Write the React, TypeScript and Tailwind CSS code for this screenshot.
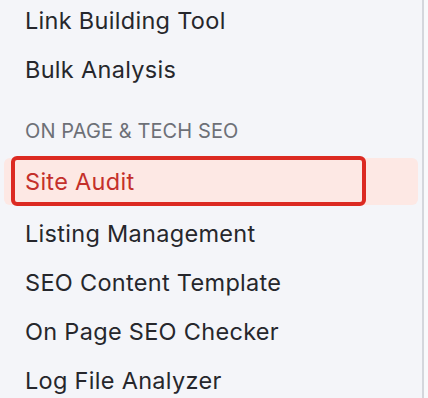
export default function App() {
  const tools = ["Listing Management", "SEO Content Template", "On Page SEO Checker", "Log File Analyzer"];

  return (
    <div className="flex h-[398px] w-[428px] overflow-hidden bg-[#f4f5f9] font-['Inter',sans-serif]">
      <div className="flex-1 pt-[1px]">
        <div className="flex h-[40px] items-center pl-[25px] text-[23.5px] tracking-[0.3px] text-[#26272c]">Link Building Tool</div>
        <div className="mt-[9px] flex h-[40px] items-center pl-[25px] text-[23.5px] tracking-[0.3px] text-[#26272c]">Bulk Analysis</div>

        <div className="mt-[26px] pl-[25px] text-[20px] tracking-[0.1px] text-[#6d7077]">ON PAGE &amp; TECH SEO</div>

        <div className="relative mt-[12px] ml-[4px] mr-[4px] flex h-[47px] items-center rounded-[6px] bg-[#fde8e4]">
          <span className="pl-[21px] text-[23.5px] tracking-[0.3px] text-[#c4302b]">Site Audit</span>
          <div className="absolute top-[-2px] left-[7px] h-[50px] w-[355px] rounded-[6px] border-[4px] border-[#dc2a22]" />
        </div>

        {tools.map((t) => (
          <div key={t} className="mt-[9px] flex h-[40px] items-center pl-[25px] text-[23.5px] tracking-[0.3px] text-[#26272c]">
            {t}
          </div>
        ))}
      </div>
      <div className="w-[2px] bg-[#d4d6dc]" />
      <div className="w-[4px] bg-[#f8f9fb]" />
    </div>
  );
}
